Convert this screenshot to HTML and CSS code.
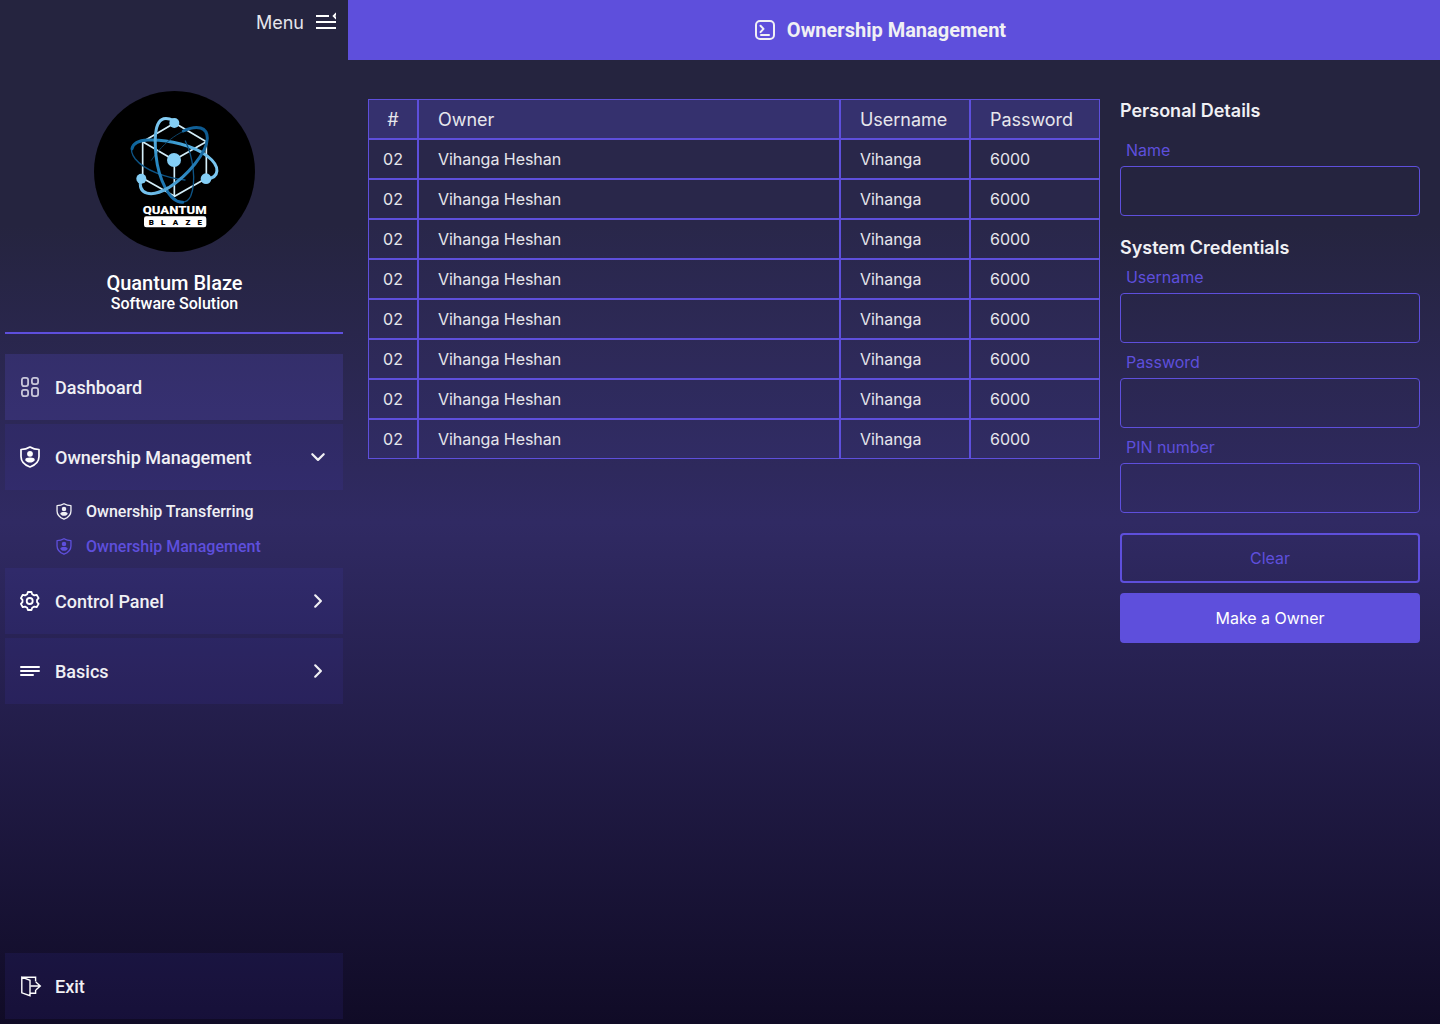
FILE: index.html
```html
<!DOCTYPE html>
<html lang="en">
<head>
<meta charset="utf-8">
<title>Ownership Management</title>
<link rel="stylesheet" href="styles.css">
</head>
<body>
<svg class="defs" width="0" height="0" aria-hidden="true">
  <defs>
    <symbol id="shield" viewBox="0 0 20 22">
      <path d="M10 1C7.600 2.500 4 3.500 1 3.500V10.500C1 15.500 4.500 19 10 21C15.500 19 19 15.500 19 10.500V3.500C16 3.500 12.400 2.500 10 1Z" fill="none" stroke="currentColor" stroke-width="1.700" stroke-linejoin="round"/>
      <circle cx="10" cy="7.800" r="2.900" fill="currentColor"/>
      <path d="M5.200 14.200C5.200 12.200 7 11.600 10 11.600S14.800 12.200 14.800 14.200C13.500 15.900 12 16.600 10 16.600S6.500 15.900 5.200 14.200Z" fill="currentColor"/>
    </symbol>
    <symbol id="chevron" viewBox="0 0 10 16">
      <path d="M2.200 2.300L7.900 8L2.200 13.700" fill="none" stroke="currentColor" stroke-width="2.200" stroke-linecap="round" stroke-linejoin="round"/>
    </symbol>
    <linearGradient id="orbit" x1="0" y1="0" x2="1" y2="0">
      <stop offset="0" stop-color="#0d6299"/><stop offset=".5" stop-color="#3b9bd0"/><stop offset="1" stop-color="#7cc8f2"/>
    </linearGradient>
    <linearGradient id="orbit-up" x1="0" y1="1" x2="0" y2="0">
      <stop offset="0" stop-color="#1467a3"/><stop offset=".5" stop-color="#2a8cc6"/><stop offset="1" stop-color="#86cef5"/>
    </linearGradient>
    <linearGradient id="orbit-down" x1="0" y1="1" x2="1" y2="0">
      <stop offset="0" stop-color="#7cc8f2"/><stop offset=".5" stop-color="#2a86c0"/><stop offset="1" stop-color="#0b568c"/>
    </linearGradient>
  </defs>
</svg>
<div class="app">
  <aside class="sidebar">
    <div class="menu">
      <span>Menu</span>
      <svg width="20" height="18" viewBox="0 0 20 18" fill="none" stroke="currentColor" stroke-width="2"><path d="M0 4H13M0 10H20M0 16H20"/><path d="M20.500 1.300L17.800 4L20.500 6.700" stroke-width="2"/></svg>
    </div>
    <svg class="logo" width="161" height="161" viewBox="12 14 483 483">
      <circle cx="253.500" cy="255.500" r="241.500" fill="#000"/>
      <g fill="none" stroke="#d3eef9" stroke-width="5">
        <path d="M158 166L254 110L349 166V276L254 330L158 276Z"/>
        <path d="M158 166L252 221L349 166M253 221V330"/>
      </g>
      <g fill="none" stroke-linecap="round">
        <path d="M285 281C230 274 165 254 136 218C113 188 126 165 163 163" stroke="#0d5384" stroke-width="4"/>
        <path d="M126 187C130 168 149 162 173 161C235 158 315 180 353 210C392 240 389 274 350 278" stroke="url(#orbit)" stroke-width="9"/>
        <path d="M286 164C309 211 320 285 302 330C291 353 267 354 245 328" stroke="#0d5384" stroke-width="4"/>
        <path d="M184 222C222 165 278 124 325 124" stroke="#0d4266" stroke-width="3"/>
        <path d="M278 348C238 350 205 275 198 208C190 125 202 78 251 103" stroke="url(#orbit-up)" stroke-width="9"/>
        <path d="M280 134C322 114 352 123 352 156C351 199 292 269 236 304C185 334 141 327 153 276" stroke="url(#orbit-down)" stroke-width="9"/>
      </g>
      <g fill="#84cef5"><circle cx="253" cy="110" r="15"/><circle cx="252" cy="221" r="21"/><circle cx="154" cy="277" r="15"/><circle cx="348" cy="277" r="16"/></g>
      <text class="logo-name" x="158" y="382" textLength="192" lengthAdjust="spacingAndGlyphs">QUANTUM</text>
      <rect x="162" y="390" width="187" height="33" rx="7" fill="#fff"/>
      <text class="logo-tag" x="176" y="415" textLength="160">BLAZE</text>
    </svg>
    <h1 class="brand">Quantum Blaze</h1>
    <p class="tagline">Software Solution</p>
    <nav class="nav">
      <a class="item active">
        <svg class="icon dim" width="20" height="22" viewBox="0 0 20 22" fill="none" stroke="currentColor" stroke-width="1.800"><rect x="1.900" y="1.900" width="6.200" height="8.200" rx="2"/><rect x="11.900" y="1.900" width="6.200" height="6.200" rx="2"/><rect x="1.900" y="13.900" width="6.200" height="6.200" rx="2"/><rect x="11.900" y="11.900" width="6.200" height="8.200" rx="2"/></svg>
        <span>Dashboard</span>
      </a>
      <a class="item">
        <svg class="icon" width="20" height="22"><use href="#shield"/></svg>
        <span>Ownership Management</span>
        <svg class="arrow open" width="10" height="16"><use href="#chevron"/></svg>
      </a>
      <div class="submenu">
        <a class="subitem"><svg width="16" height="17"><use href="#shield"/></svg><span>Ownership Transferring</span></a>
        <a class="subitem current"><svg width="16" height="17"><use href="#shield"/></svg><span>Ownership Management</span></a>
      </div>
      <a class="item">
        <svg class="icon" width="20" height="20" viewBox="0 0 20 20" fill="none" stroke="currentColor" stroke-width="1.800" stroke-linejoin="round"><circle cx="9.700" cy="10" r="3"/><path d="M7.900 1H11.500L12.200 3.200L14.300 4.400L16.600 3.800L18.600 7.100L17 8.900V11.100L18.600 12.900L16.600 16.200L14.300 15.600L12.200 16.800L11.500 19H7.900L7.200 16.800L5.100 15.600L2.800 16.200L.9 12.900L2.500 11.100V8.900L.9 7.100L2.800 3.800L5.100 4.400L7.200 3.200Z"/></svg>
        <span>Control Panel</span>
        <svg class="arrow" width="10" height="16"><use href="#chevron"/></svg>
      </a>
      <a class="item">
        <svg class="icon" width="20" height="10" viewBox="0 0 20 10" fill="none" stroke="currentColor" stroke-width="2" stroke-linecap="round"><path d="M1 1H19M1 5H19M1 9H13"/></svg>
        <span>Basics</span>
        <svg class="arrow" width="10" height="16"><use href="#chevron"/></svg>
      </a>
    </nav>
    <a class="item exit">
      <svg class="icon" width="22" height="22" viewBox="0 0 22 22" fill="none" stroke="currentColor" stroke-width="1.400"><path d="M1.800 2.200L10 5.300V20.700L1.800 17.800ZM1.800 2.200H15.600V6.500M15.600 15V18.200H10M10.800 11H20M15.800 7L20.300 11L15.800 15"/></svg>
      <span>Exit</span>
    </a>
  </aside>
  <main class="main">
    <header class="topbar">
      <svg width="20" height="20" viewBox="0 0 20 20" fill="none" stroke="currentColor" stroke-width="2" stroke-linecap="round" stroke-linejoin="round"><rect x="1" y="1" width="18" height="18" rx="4"/><path d="M5.500 5.700L8.500 8.900L5.500 12.100M6 15H14"/></svg>
      <h2>Ownership Management</h2>
    </header>
    <div class="content">
      <table class="owners">
        <colgroup><col class="c-id"><col class="c-owner"><col class="c-user"><col class="c-pass"></colgroup>
        <thead><tr><th>#</th><th>Owner</th><th>Username</th><th>Password</th></tr></thead>
        <tbody>
          <tr><td>02</td><td>Vihanga Heshan</td><td>Vihanga</td><td>6000</td></tr>
          <tr><td>02</td><td>Vihanga Heshan</td><td>Vihanga</td><td>6000</td></tr>
          <tr><td>02</td><td>Vihanga Heshan</td><td>Vihanga</td><td>6000</td></tr>
          <tr><td>02</td><td>Vihanga Heshan</td><td>Vihanga</td><td>6000</td></tr>
          <tr><td>02</td><td>Vihanga Heshan</td><td>Vihanga</td><td>6000</td></tr>
          <tr><td>02</td><td>Vihanga Heshan</td><td>Vihanga</td><td>6000</td></tr>
          <tr><td>02</td><td>Vihanga Heshan</td><td>Vihanga</td><td>6000</td></tr>
          <tr><td>02</td><td>Vihanga Heshan</td><td>Vihanga</td><td>6000</td></tr>
        </tbody>
      </table>
      <form class="form">
        <h3 class="first">Personal Details</h3>
        <label>Name<input type="text"></label>
        <h3 class="second">System Credentials</h3>
        <label>Username<input type="text"></label>
        <label>Password<input type="password"></label>
        <label>PIN number<input type="password"></label>
        <button type="button" class="btn clear">Clear</button>
        <button type="button" class="btn submit">Make a Owner</button>
      </form>
    </div>
  </main>
</div>
</body>
</html>
```
FILE: styles.css
```css
* { box-sizing: border-box; }
body { margin: 0; font-family: Inter, sans-serif; color: #f0f0f4; }
h1, h2, h3, p { margin: 0; }
svg { display: block; flex: none; }
.defs { position: absolute; }
.app {
  display: flex;
  width: 1440px;
  height: 1024px;
  background: linear-gradient(180deg, #25243f 0%, #25243f 22%, #302a63 51%, #100b26 100%);
}
.sidebar { width: 348px; height: 1024px; padding: 0 5px 5px; display: flex; flex-direction: column; align-items: center; font-family: Roboto, sans-serif; }
.menu { align-self: flex-end; display: flex; gap: 12px; align-items: center; height: 45px; padding-right: 7px; color: #e6e6ec; font: 400 18px/22px Inter, sans-serif; }
.menu svg { margin-top: -3px; color: #fff; }
.logo { margin-top: 46px; }
.logo-name { font: 900 30px Roboto, sans-serif; fill: #fff; }
.logo-tag { font: 900 24px Roboto, sans-serif; fill: #000; }
.brand { margin-top: 20px; padding-left: 1px; font-size: 20px; line-height: 23px; font-weight: 500; color: #fff; }
.tagline { margin-bottom: 1px; padding-left: 1px; font-size: 16px; line-height: 18px; font-weight: 500; color: #fff; }
.nav { width: 338px; margin-top: 18px; padding-top: 20px; border-top: 2px solid #5e4fdc; display: flex; flex-direction: column; gap: 4px; }
.item { display: flex; align-items: center; width: 338px; height: 66px; padding: 0 15px; background: rgba(78, 66, 230, .1); font-size: 18px; font-weight: 500; color: #f0f0f4; }
.item.active { background: rgba(94, 79, 220, .2); }
.item span { margin-left: 15px; }
.item .icon { color: #fff; }
.item .icon.dim { color: #c9c7da; }
.arrow { margin-left: auto; margin-right: 5px; }
.arrow.open { transform: rotate(90deg); }
.submenu { display: flex; flex-direction: column; height: 70px; }
.subitem { display: flex; align-items: center; gap: 14px; height: 35px; padding-left: 51px; font-size: 16px; font-weight: 500; }
.subitem.current { color: #5e4fdc; }
.exit { margin-top: auto; }
.exit .icon { margin-right: -2px; }
.main { flex: 1; }
.topbar { height: 60px; background: #5e4fdc; display: flex; align-items: center; justify-content: center; gap: 12px; padding-right: 27px; }
.topbar h2 { font: 700 20px/24px Roboto, sans-serif; }
.content { display: flex; gap: 20px; padding: 39px 20px 0; }
.owners { width: 732px; height: 360px; table-layout: fixed; border-collapse: separate; border-spacing: 0; }
.c-id { width: 50px; }
.c-owner { width: 422px; }
.c-user, .c-pass { width: 130px; }
.owners th, .owners td { height: 40px; padding: 0 19px; border: 1px solid #5e4fdc; text-align: left; font-size: 16px; font-weight: 400; letter-spacing: -.04px; color: #e6e6ec; background: rgba(94, 79, 220, .07); }
.owners th { font-size: 18px; background: rgba(94, 79, 220, .3); }
.owners th:first-child, .owners td:first-child { padding: 0; text-align: center; }
.form { width: 300px; display: flex; flex-direction: column; }
.form h3 { font-size: 18px; line-height: 22px; font-weight: 600; }
.form .first { margin: 1px 0 13px; }
.form .second { margin: 18px 0 3px; }
.form label { display: block; height: 85px; padding-top: 5px; font-size: 16px; font-weight: 400; letter-spacing: -.04px; line-height: 20px; color: #5e4fdc; text-indent: 6px; }
.form .first + label { height: 84px; }
.form input { display: block; width: 300px; height: 50px; margin-top: 6px; border: 1px solid #5e4fdc; border-radius: 4px; background: none; }
.btn { height: 50px; margin-top: 10px; border: 2px solid #5e4fdc; border-radius: 4px; font: 400 16px Inter, sans-serif; letter-spacing: -.04px; background: none; color: #5e4fdc; }
.clear { margin-top: 16px; }
.submit { background: #5e4fdc; color: #fff; }
```
